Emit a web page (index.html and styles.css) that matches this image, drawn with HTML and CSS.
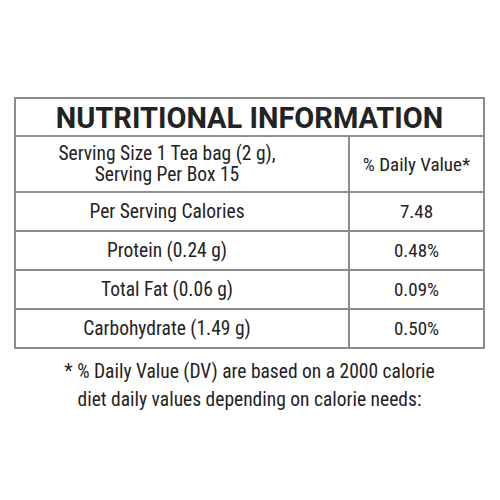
FILE: index.html
```html
<!DOCTYPE html>
<html lang="en">
<head>
  <meta charset="UTF-8" />
  <title>Nutritional Information</title>
  <link rel="stylesheet" href="styles.css">
</head>
<body>

  <!-- Tabla nutricional -->
  <table class="tabla-nutricion">
    <tr>
      <th colspan="2" class="titulo">NUTRITIONAL INFORMATION</th>
    </tr>
    <tr class="fila-porcion">
      <td class="nombre">Serving Size 1 Tea bag (2 g),<br>Serving Per Box 15</td>
      <td class="valor">% Daily Value*</td>
    </tr>
    <tr class="fila">
      <td class="nombre">Per Serving Calories</td>
      <td class="valor">7.48</td>
    </tr>
    <tr class="fila">
      <td class="nombre">Protein (0.24 g)</td>
      <td class="valor">0.48%</td>
    </tr>
    <tr class="fila">
      <td class="nombre">Total Fat (0.06 g)</td>
      <td class="valor">0.09%</td>
    </tr>
    <tr class="fila">
      <td class="nombre">Carbohydrate (1.49 g)</td>
      <td class="valor">0.50%</td>
    </tr>
  </table>

  <p class="nota">* % Daily Value (DV) are based on a 2000 calorie<br>diet daily values depending on calorie needs:</p>

</body>
</html>
```

FILE: styles.css
```css
* { margin: 0; padding: 0; box-sizing: border-box; }

body {
  font-family: "Roboto", "Open Sans", sans-serif;
  font-stretch: 75%;
  background: #fff;
  color: #232323;
  padding: 97px 15px 0 14px;
  width: 500px;
  height: 500px;
}

.tabla-nutricion {
  width: 471px;
  border-collapse: collapse;
  border: 2px solid #8c8c8c;
}

.tabla-nutricion td,
.tabla-nutricion th {
  border: 2px solid #8c8c8c;
  text-align: center;
  font-weight: normal;
  font-size: 19.5px;
  line-height: 21px;
}

.tabla-nutricion .titulo {
  height: 38px;
  font-size: 29px;
  font-weight: bold;
  font-stretch: 100%;
  line-height: 30px;
  padding-top: 2px;
}

.fila-porcion td { height: 56px; }

.fila td { height: 39px; }

.tabla-nutricion .nombre {
  width: 334px;
  padding-right: 30px;
}

.tabla-nutricion .valor {
  font-size: 19px;
}

.nota {
  text-align: center;
  font-size: 19.5px;
  line-height: 28px;
  margin-top: 9px;
}
```
